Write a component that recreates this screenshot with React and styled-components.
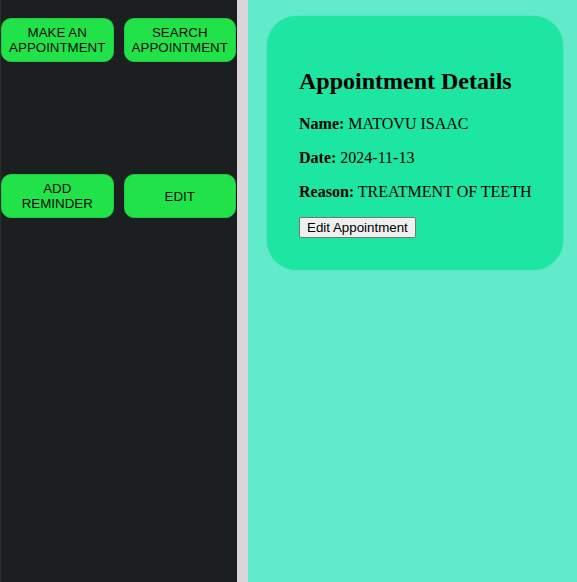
import React from "react";
import styled, { createGlobalStyle } from "styled-components";

const GlobalStyle = createGlobalStyle`
  html, body {
    margin: 0;
    padding: 0;
    height: 100%;
  }
  body {
    background: #d9d5d9;
    font-family: "Liberation Serif", "Times New Roman", serif;
  }
  #root {
    height: 100%;
  }
`;

const Layout = styled.div`
  display: flex;
  height: 100%;
  gap: 11px;
`;

const Sidebar = styled.aside`
  width: 237px;
  flex-shrink: 0;
  box-sizing: border-box;
  background: #1c1f20;
  border-left: 1px solid #2a2d2e;
  padding: 18px 1px 0 0;
`;

const ButtonGrid = styled.div`
  display: grid;
  grid-template-columns: 1fr 1fr;
  column-gap: 10px;
  row-gap: 112px;
`;

const NavButton = styled.button`
  box-sizing: border-box;
  min-height: 44px;
  padding: 6px 4px;
  border: 1px solid #1fc944;
  border-radius: 10px;
  background: #22e24a;
  color: #0a0a0a;
  font-family: "Liberation Sans", Arial, sans-serif;
  font-size: 13.33px;
  line-height: 15px;
  text-transform: uppercase;
  text-align: center;
  cursor: pointer;
`;

const Main = styled.main`
  flex: 1;
  background: #61ebca;
  padding: 16px 0 0 19px;
`;

const Card = styled.section`
  display: inline-block;
  padding: 32px;
  background: #1de5a2;
  border-radius: 30px;
  box-shadow: 0 0 2px rgba(0, 140, 90, 0.25);
  color: #000;
`;

const Title = styled.h2`
  font-size: 24px;
  margin: 20px 0;
`;

const Field = styled.p`
  font-size: 16px;
  margin: 16px 0;
`;

const EditButton = styled.button`
  font-family: "Liberation Sans", Arial, sans-serif;
  font-size: 13.33px;
  padding: 2px 7px;
  background: #efefef;
  border: 1px solid #767676;
  border-radius: 2px;
  color: #000;
  cursor: pointer;
`;

const appointment = {
  name: "MATOVU ISAAC",
  date: "2024-11-13",
  reason: "TREATMENT OF TEETH",
};

export default function App() {
  return (
    <>
      <GlobalStyle />
      <Layout>
        <Sidebar>
          <ButtonGrid>
            <NavButton>Make an<br />Appointment</NavButton>
            <NavButton>Search<br />Appointment</NavButton>
            <NavButton>Add<br />Reminder</NavButton>
            <NavButton>Edit</NavButton>
          </ButtonGrid>
        </Sidebar>
        <Main>
          <Card>
            <Title>Appointment Details</Title>
            <Field><strong>Name:</strong> {appointment.name}</Field>
            <Field><strong>Date:</strong> {appointment.date}</Field>
            <Field><strong>Reason:</strong> {appointment.reason}</Field>
            <EditButton>Edit Appointment</EditButton>
          </Card>
        </Main>
      </Layout>
    </>
  );
}
